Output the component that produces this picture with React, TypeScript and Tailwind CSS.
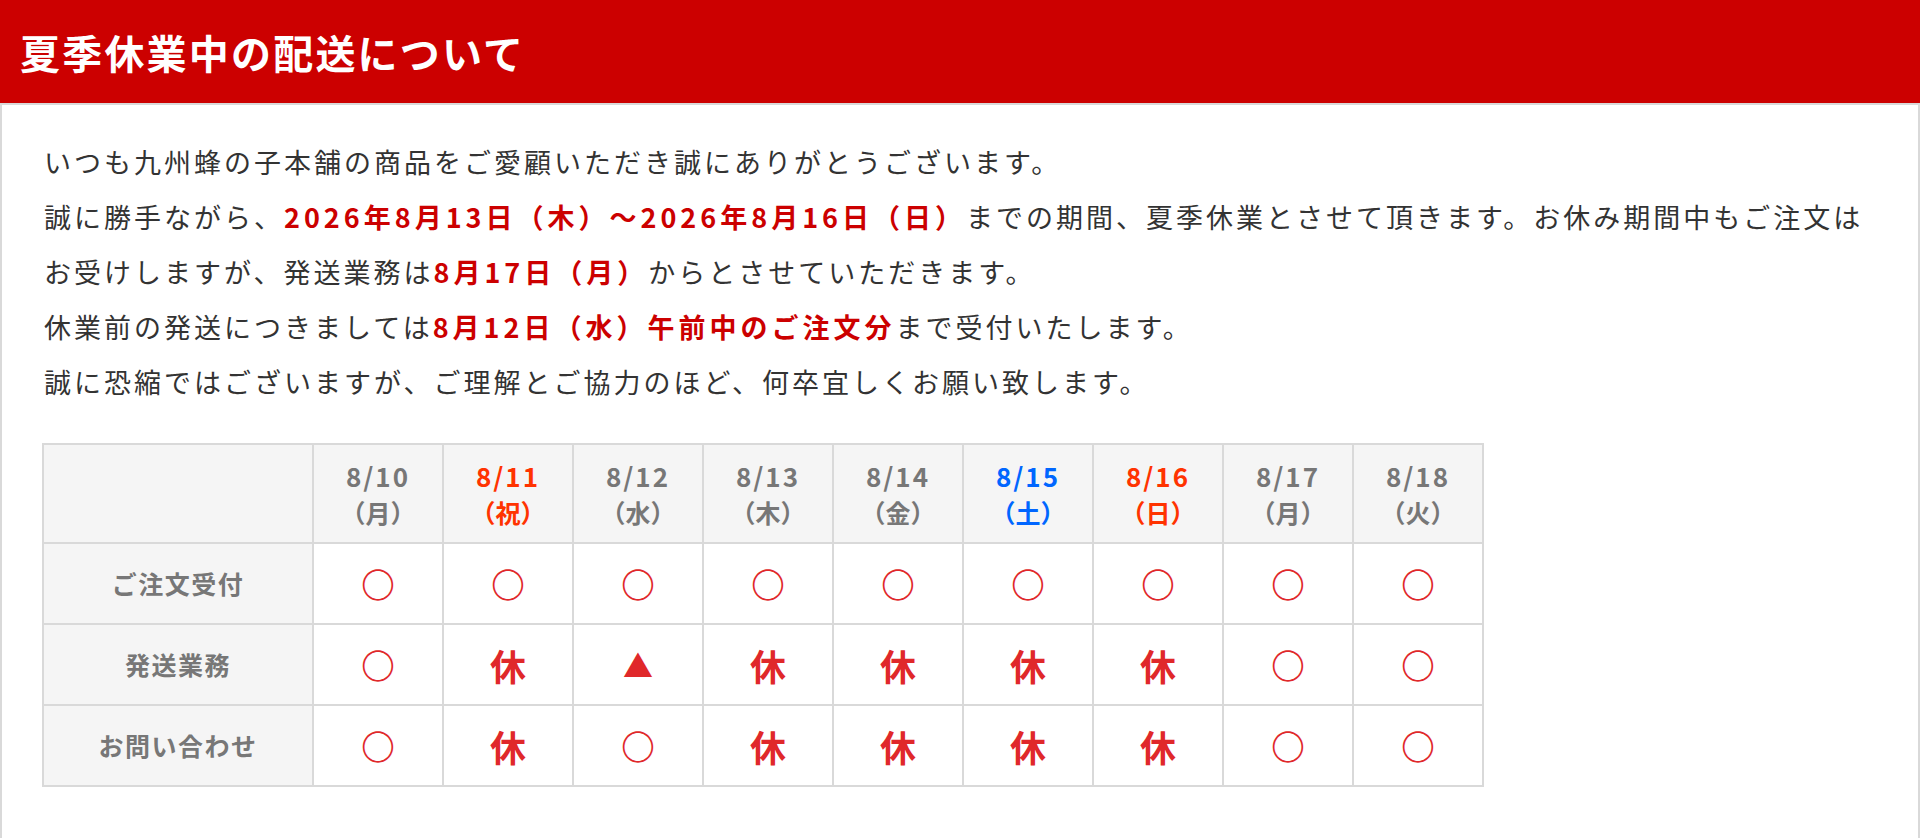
import React from "react";

const GRAY = "text-[#777777]";

type Day = { date: string; week: string; color: string };

const DAYS: Day[] = [
  { date: "8/10", week: "（月）", color: GRAY },
  { date: "8/11", week: "（祝）", color: "text-[#ff3300]" },
  { date: "8/12", week: "（水）", color: GRAY },
  { date: "8/13", week: "（木）", color: GRAY },
  { date: "8/14", week: "（金）", color: GRAY },
  { date: "8/15", week: "（土）", color: "text-[#0066ff]" },
  { date: "8/16", week: "（日）", color: "text-[#ff3300]" },
  { date: "8/17", week: "（月）", color: GRAY },
  { date: "8/18", week: "（火）", color: GRAY },
];

type Mark = "o" | "x" | "t";

const ROWS: { label: string; marks: Mark[] }[] = [
  { label: "ご注文受付", marks: ["o", "o", "o", "o", "o", "o", "o", "o", "o"] },
  { label: "発送業務", marks: ["o", "x", "t", "x", "x", "x", "x", "o", "o"] },
  { label: "お問い合わせ", marks: ["o", "x", "o", "x", "x", "x", "x", "o", "o"] },
];

function MarkCell({ mark }: { mark: Mark }) {
  if (mark === "x") {
    return <span className="text-[36px] font-bold tracking-normal text-[#e0282a]">休</span>;
  }
  if (mark === "t") {
    return <span className="text-[30px] tracking-normal text-[#e0282a]">▲</span>;
  }
  return <span className="text-[34px] font-light tracking-normal text-[#e0282a]">〇</span>;
}

export default function App() {
  return (
    <div className="w-[1920px] h-[838px] bg-white font-['Noto_Sans_CJK_JP','Noto_Sans',sans-serif]">
      {/* Title bar */}
      <div className="h-[103px] bg-[#cc0000] flex items-center pl-[20px]">
        <h1 className="text-[40px] font-bold tracking-[2.2px] text-white leading-none">夏季休業中の配送について</h1>
      </div>

      <div className="border-2 border-[#d9d9d9] px-[42px] pt-[29px] pb-[52px]">
        {/* Notice text */}
        <div className="text-[27px] tracking-[3px] leading-[55px] text-[#333333]">
          <p>いつも九州蜂の子本舗の商品をご愛顧いただき誠にありがとうございます。</p>
          <p className="whitespace-nowrap">
            誠に勝手ながら、
            <span className="font-bold tracking-[4px] text-[#cc0000]">2026年8月13日（木）～2026年8月16日（日）</span>
            までの期間、夏季休業とさせて頂きます。お休み期間中もご注文は
            <br />
            お受けしますが、発送業務は<span className="font-bold tracking-[4px] text-[#cc0000]">8月17日（月）</span>からとさせていただきます。
          </p>
          <p>
            休業前の発送につきましては<span className="font-bold tracking-[4px] text-[#cc0000]">8月12日（水）午前中のご注文分</span>まで受付いたします。
          </p>
          <p>誠に恐縮ではございますが、ご理解とご協力のほど、何卒宜しくお願い致します。</p>
        </div>

        {/* Schedule table */}
        <table className="mt-[34px] -ml-[2px] w-[1440px] table-fixed border-collapse border-2 border-[#d9d9d9] text-center">
          <colgroup>
            <col className="w-[270px]" />
            {DAYS.map((d) => (
              <col key={d.date} className="w-[130px]" />
            ))}
          </colgroup>
          <thead>
            <tr className="h-[99px] bg-[#f5f5f5]">
              <th className="border-2 border-[#d9d9d9]" />
              {DAYS.map((d) => (
                <th
                  key={d.date}
                  className={`border-2 border-[#d9d9d9] text-[26px] font-bold leading-[36px] tracking-[2px] ${d.color}`}
                >
                  <div>{d.date}</div>
                  <div className="text-[25px] tracking-normal">{d.week}</div>
                </th>
              ))}
            </tr>
          </thead>
          <tbody>
            {ROWS.map((row) => (
              <tr key={row.label} className="h-[81px]">
                <th className="border-2 border-[#d9d9d9] bg-[#f5f5f5] text-[25px] font-bold tracking-[1.5px] text-[#777777]">
                  {row.label}
                </th>
                {row.marks.map((m, i) => (
                  <td key={i} className="border-2 border-[#d9d9d9] bg-white">
                    <MarkCell mark={m} />
                  </td>
                ))}
              </tr>
            ))}
          </tbody>
        </table>
      </div>
    </div>
  );
}
